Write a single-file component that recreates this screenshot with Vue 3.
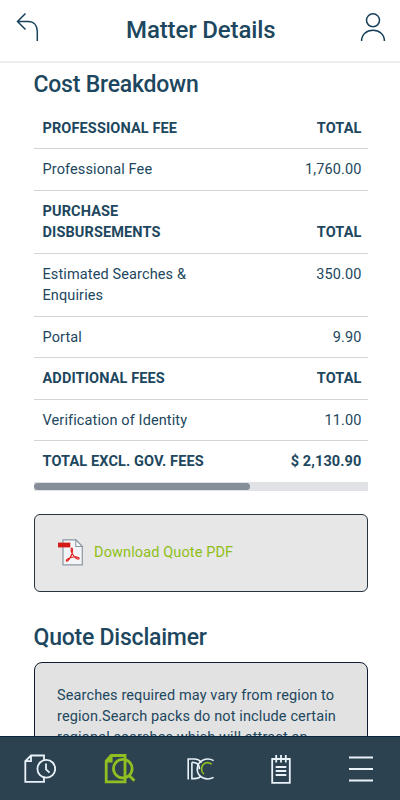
<script setup>
const rows = [
  { label: 'PROFESSIONAL FEE', value: 'TOTAL', heading: true },
  { label: 'Professional Fee', value: '1,760.00' },
  { label: 'PURCHASE DISBURSEMENTS', value: 'TOTAL', heading: true },
  { label: 'Estimated Searches & Enquiries', value: '350.00' },
  { label: 'Portal', value: '9.90' },
  { label: 'ADDITIONAL FEES', value: 'TOTAL', heading: true },
  { label: 'Verification of Identity', value: '11.00' },
  { label: 'TOTAL EXCL. GOV. FEES', value: '$ 2,130.90', heading: true },
];
</script>

<template>
  <div class="screen">
    <header class="topbar">
      <button class="topbar__btn" aria-label="Back">
        <svg width="24" height="30" viewBox="0 0 24 30">
          <path d="M9.5 1.5 1.5 9.5l8 8M1.5 9.5H12c6 0 9.3 4 9.3 10V29" />
        </svg>
      </button>
      <h1 class="topbar__title">Matter Details</h1>
      <button class="topbar__btn" aria-label="Profile">
        <svg width="26" height="30" viewBox="0 0 26 30">
          <circle cx="13" cy="8.3" r="6.5" />
          <path d="M1.6 29C1.6 22.5 6.4 18.3 13 18.3S24.4 22.5 24.4 29" />
        </svg>
      </button>
    </header>

    <main class="content">
      <h2 class="heading">Cost Breakdown</h2>
      <div class="fees">
        <div v-for="row in rows" :key="row.label" class="fees__row" :class="{ 'fees__row--heading': row.heading }">
          <span class="fees__label">{{ row.label }}</span>
          <span class="fees__value">{{ row.value }}</span>
        </div>
      </div>
      <div class="scrollbar"><div class="scrollbar__thumb"></div></div>

      <a class="download">
        <svg class="download__icon" width="26" height="27" viewBox="0 0 26 27">
          <path d="M5 .9h12.8l6.5 6.6v18.3H5z" fill="#f4f5f6" stroke="#8b98a3" stroke-width="1.2" />
          <path d="M17.8.9v6.6h6.5z" fill="#fff" stroke="#8b98a3" stroke-width="1.1" />
          <path d="M0 3.6h12.3v4.8H0z" fill="#d51b17" />
          <path
            d="M14 9.2c-1.5-.1-1 3.6.9 6.6 1.7 2.6 4.4 4.6 5.7 4.2 1.6-.8-.6-2.4-4.8-2-3.9.4-8 2.4-7.5 4 .9 1.2 3.8-2.5 5.2-6.3.9-2.5 1.5-6.3.5-6.5z"
            fill="none"
            stroke="#e02420"
            stroke-width="1.2"
          />
        </svg>
        <span>Download Quote PDF</span>
      </a>

      <h2 class="heading heading--disclaimer">Quote Disclaimer</h2>
      <div class="disclaimer">
        Searches required may vary from region to region.Search packs do not include certain regional searches which will attract an
      </div>
    </main>

    <nav class="tabs">
      <a class="tabs__item">
        <svg width="32" height="30" viewBox="0 0 32 30">
          <path d="M20 7V1.5H7L1.3 7.2v20.6H20v-5.3M7 1.5v5.7H1.3" />
          <circle cx="22.3" cy="14.8" r="8.9" />
          <path d="M22 9.5v5.8l3.5 3.3" />
        </svg>
      </a>
      <a class="tabs__item tabs__item--active">
        <svg width="32" height="30" viewBox="0 0 32 30">
          <path d="M21 5V1.5H7.2L2.2 7v20.8H21V5M7.2 1.5V7h-5" />
          <circle cx="18.8" cy="14.6" r="9.3" />
          <path d="m25 21.2 5.4 5.6" />
        </svg>
      </a>
      <a class="tabs__item">
        <svg width="28" height="22" viewBox="0 0 28 22" class="logo">
          <path d="M1.2 21.5V1H7c3.6 0 6 1.4 7.3 3.8M4.9 4.2v16.4h2.6c3 0 5-.8 6.3-2.4" />
          <path d="M5 4.2c5.2 0 7.4 3 7.4 7" />
          <path d="M26.6 2.6C19.5-1.2 10.2 2.8 10.2 11s9.3 12.2 16.4 8.4" />
          <path class="logo__accent" d="M24.6 6.3C20.8 2.8 14.6 5.2 14.6 11c0 2.3.9 4.1 2.3 5.2" />
        </svg>
      </a>
      <a class="tabs__item">
        <svg width="20" height="30" viewBox="0 0 20 30">
          <path d="M1.2 5h17.6v23.8H1.2zM5.2 1v7.5M10 1v7.5M14.8 1v7.5M4.7 13h10.6M4.7 17h10.6M4.7 21h10.6" />
        </svg>
      </a>
      <a class="tabs__item">
        <svg width="24" height="26" viewBox="0 0 24 26">
          <path d="M0 1.5h24M0 13h24M0 24.5h24" />
        </svg>
      </a>
    </nav>
  </div>
</template>

<style>
body {
  margin: 0;
}
</style>

<style scoped>
.screen {
  display: flex;
  flex-direction: column;
  box-sizing: border-box;
  width: 400px;
  height: 800px;
  overflow: hidden;
  background: #fff;
  color: #1d475e;
  font-family: Roboto, sans-serif;
}

.topbar {
  display: flex;
  flex: none;
  align-items: flex-start;
  justify-content: space-between;
  box-sizing: border-box;
  height: 63px;
  padding: 12px 14px 0 15.5px;
  border-bottom: 2px solid #eee;
}

.topbar__btn {
  padding: 0;
  border: 0;
  background: none;
}

.topbar__btn svg {
  display: block;
  fill: none;
  stroke: #17415a;
  stroke-width: 1.5;
}

.topbar__title {
  margin: 3px 0 0;
  padding-left: 2px;
  font-size: 24px;
  font-weight: 500;
  line-height: 30px;
  letter-spacing: -0.13px;
}

.content {
  flex: 1;
  min-height: 0;
  padding: 0 32px 0 33.5px;
  overflow: hidden;
}

.heading {
  margin: 7px 0 8px;
  font-size: 23px;
  font-weight: 500;
  line-height: 30px;
  letter-spacing: -0.22px;
}

.heading--disclaimer {
  margin: 31.5px 0 8.5px;
}

.fees__row {
  display: flex;
  align-items: flex-end;
  justify-content: space-between;
  box-sizing: border-box;
  padding: 9.6px 6.5px 9.4px 9px;
  border-bottom: 1px solid #d3d5d6;
  font-size: 14.5px;
  line-height: 21.5px;
  letter-spacing: 0.12px;
}

.fees__row:nth-child(4) {
  align-items: flex-start;
}

.fees__row:last-child {
  border-bottom: 0;
}

.fees__row--heading {
  font-weight: 700;
}

.fees__label {
  width: 170px;
}

.scrollbar {
  box-sizing: border-box;
  height: 9px;
  padding: 1px 0;
  background: #e1e2e5;
}

.scrollbar__thumb {
  width: 216px;
  height: 7px;
  border-radius: 4px;
  background: #858e97;
}

.download {
  display: flex;
  align-items: center;
  gap: 10.5px;
  box-sizing: border-box;
  height: 78px;
  margin-top: 23px;
  padding: 0 0 1px 23px;
  border: 1px solid #26343f;
  border-radius: 6px;
  background: #e7e7e7;
  color: #8fbf16;
  font-size: 14.5px;
  letter-spacing: 0.12px;
}

.disclaimer {
  box-sizing: border-box;
  height: 160px;
  padding: 23.5px 22.5px;
  border: 1px solid #101d30;
  border-radius: 8px;
  background: #e2e2e2;
  font-size: 14.5px;
  line-height: 20.8px;
  letter-spacing: 0.12px;
}

.tabs {
  display: flex;
  flex: none;
  box-sizing: border-box;
  height: 64px;
  padding-top: 1px;
  border-top: 1px solid #0b2740;
  background: #2d4250;
}

.tabs__item {
  display: flex;
  flex: none;
  align-items: center;
  justify-content: center;
  width: 80.25px;
}

.tabs__item svg {
  fill: none;
  stroke: #e9f2f9;
  stroke-width: 1.8;
}

.tabs__item--active svg {
  stroke: #8fbf21;
  stroke-width: 2.8;
}

.tabs__item .logo {
  stroke-width: 1.6;
}

.tabs__item .logo__accent {
  stroke: #8fbf21;
}
</style>
